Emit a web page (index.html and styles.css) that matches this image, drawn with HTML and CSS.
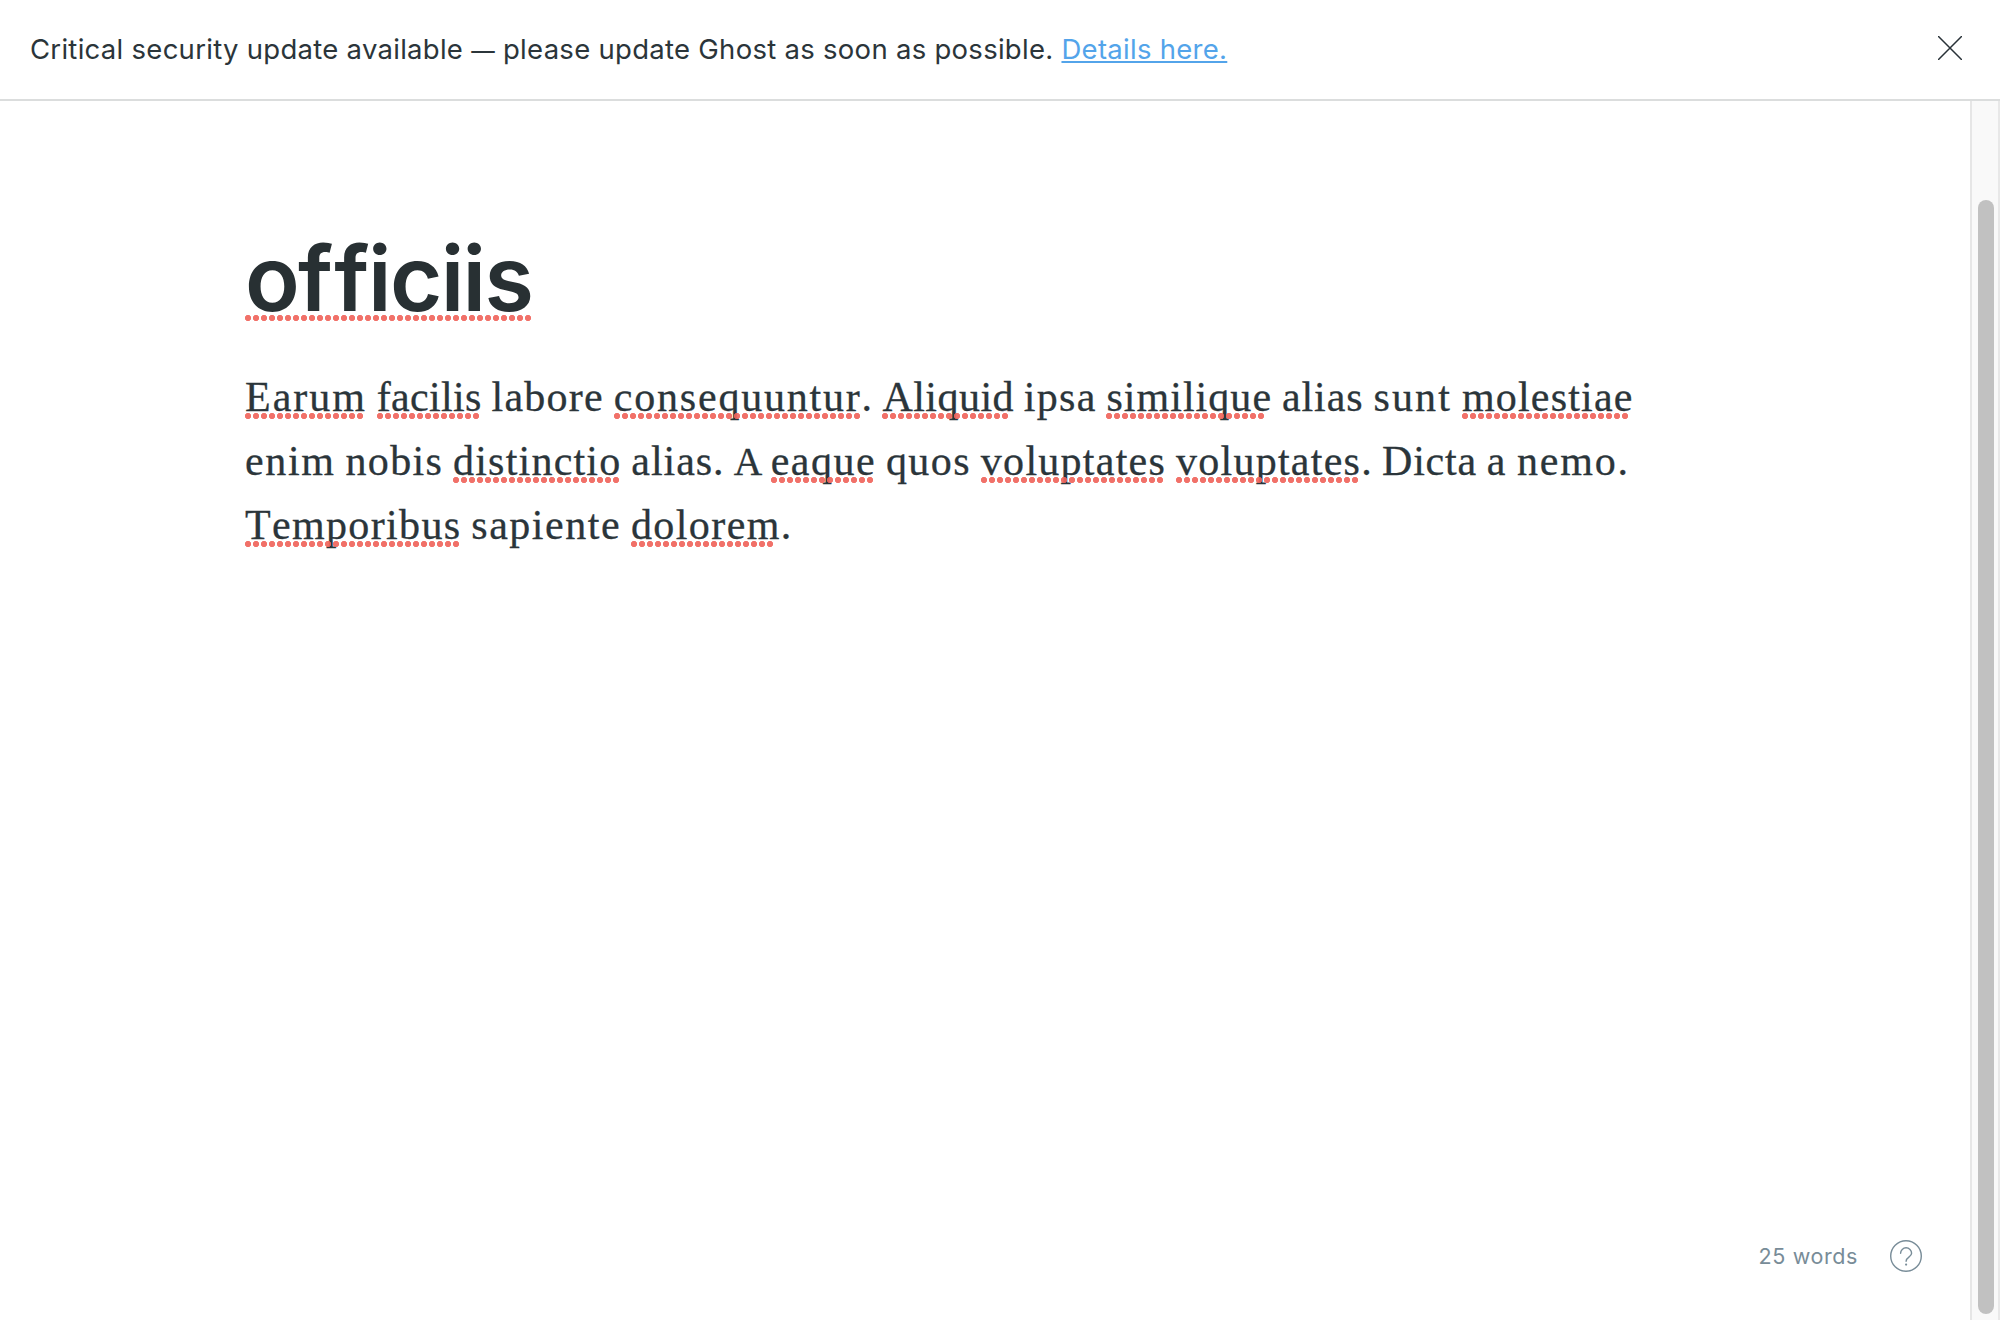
FILE: index.html
```html
<!DOCTYPE html>
<html lang="en">
<head>
<meta charset="utf-8">
<title>Editor</title>
<link rel="stylesheet" href="styles.css">
</head>
<body>
<div class="app">
  <header class="alert">
    <p class="alert-text"><span class="alert-message">Critical security update available <span class="dash">—</span> please update Ghost as soon as possible.</span> <a class="alert-link" href="#">Details here.</a></p>
    <button class="alert-close" aria-label="Close">
      <svg width="24" height="24" viewBox="0 0 24 24"><path d="M.5.5l23 23M23.5.5l-23 23" fill="none" stroke="#293238" stroke-width="1.5" stroke-linecap="round"/></svg>
    </button>
  </header>
  <div class="workspace">
    <main class="editor">
      <article class="post">
        <h1 class="title"><span class="misspelled">o<span class="title-f">f</span>ficiis</span></h1>
        <p class="body"><span class="misspelled w-earum">Earum</span> <span class="misspelled w-facilis">facilis</span> <span class="w-labore">labore</span> <span class="misspelled w-consequuntur">consequuntur</span>. <span class="misspelled w-aliquid">Aliquid</span> <span class="w-ipsa">ipsa</span> <span class="misspelled w-similique">similique</span> <span class="w-alias">alias</span> <span class="w-sunt">sunt</span> <span class="misspelled w-molestiae">molestiae</span><br>
        <span class="w-enim">enim</span> <span class="w-nobis">nobis</span> <span class="misspelled w-distinctio">distinctio</span> <span class="w-alias">alias</span>. <span class="w-a-cap">A</span> <span class="misspelled w-eaque">eaque</span> <span class="w-quos">quos</span> <span class="misspelled w-voluptates">voluptates</span> <span class="misspelled w-voluptates">voluptates</span>. <span class="w-dicta">Dicta</span> <span class="w-a">a</span> <span class="w-nemo">nemo</span>.<br>
        <span class="misspelled w-temporibus">Temporibus</span> <span class="w-sapiente">sapiente</span> <span class="misspelled w-dolorem">dolorem</span>.</p>
      </article>
      <footer class="status">
        <span class="word-count">25 words</span>
        <svg class="help" width="32" height="32" viewBox="0 0 32 32" fill="none" stroke="#788c98" stroke-width="1.4" stroke-linecap="round"><circle cx="16" cy="16" r="15.3"/><path d="M10.6 13.3a5.5 5.5 0 0 1 11 0c0 3.9-5.5 3.8-5.5 7.9"/><circle cx="16.1" cy="24.6" r="1.1" fill="#788c98" stroke="none"/></svg>
      </footer>
    </main>
    <div class="scroll-track"><div class="scroll-thumb"></div></div>
  </div>
</div>
</body>
</html>
```

FILE: styles.css
```css
* { box-sizing: border-box; }
body { margin: 0; background: #fff; color: #2b353a; font-family: Inter, "Liberation Sans", sans-serif; }
.app { display: flex; flex-direction: column; height: 1320px; overflow: hidden; }

.alert { display: flex; justify-content: space-between; align-items: center; height: 101px; padding: 0 38px 0 30px; border-bottom: 2px solid #dbdddd; }
.alert-text { margin: 0 0 2px; font-size: 27.5px; line-height: 40px; letter-spacing: 0.28px; white-space: nowrap; }
.dash { font-size: 23.5px; line-height: 1; }
.alert-link { color: #53a4ea; text-decoration: underline; text-decoration-thickness: 2px; text-underline-offset: 2px; text-decoration-skip-ink: none; }
.alert-close { display: flex; padding: 0; margin: 0 0 3px; border: 0; background: none; }

.workspace { display: flex; flex: 1; min-height: 0; }
.editor { display: flex; flex-direction: column; justify-content: space-between; flex: 1; padding: 126px 48px 48px 245px; }

.title { margin: 0; font-size: 90px; line-height: 104px; font-weight: 600; letter-spacing: -1.7px; color: #283033; font-variant-ligatures: none; }
.title-f { letter-spacing: 1.2px; }
.body { margin: 34px 0 0; font-family: "Liberation Serif", serif; font-size: 42px; line-height: 64px; letter-spacing: 0.5px; word-spacing: -1.16px; font-kerning: none; font-variant-ligatures: none; white-space: nowrap; -webkit-text-stroke: 0.3px #2b353a; }

.misspelled { position: relative; display: inline-block; }
.misspelled::after { content: ""; position: absolute; left: 0; bottom: 10px; width: 100%; width: round(down, 100% + 2px, 8px); height: 6px; background: radial-gradient(circle at 3px 3px, #f0655c 2.8px, transparent 3.4px) 0 0 / 8px 6px repeat-x; opacity: 0.92; }
.title .misspelled::after { width: 286px; }

.w-earum { letter-spacing: 1.99px; }
.w-facilis { letter-spacing: 0.32px; }
.w-labore { letter-spacing: 1.26px; }
.w-consequuntur { letter-spacing: 1.79px; }
.w-aliquid { letter-spacing: 0.46px; }
.w-ipsa { letter-spacing: 1.28px; }
.w-similique { letter-spacing: 1.03px; }
.w-alias { letter-spacing: 0.95px; }
.w-sunt { letter-spacing: 2.15px; }
.w-molestiae { letter-spacing: 1.19px; }
.w-enim { letter-spacing: 1.68px; }
.w-nobis { letter-spacing: 1.32px; }
.w-distinctio { letter-spacing: 1.21px; }
.w-a-cap { font-size: 39.5px; line-height: 1; letter-spacing: -1.5px; }
.w-eaque { letter-spacing: 1.48px; }
.w-quos { letter-spacing: 1.44px; }
.w-voluptates { letter-spacing: 1.26px; }
.w-dicta { letter-spacing: 0.78px; }
.w-a { letter-spacing: 1.7px; }
.w-nemo { letter-spacing: 1.81px; }
.w-temporibus { letter-spacing: 1.35px; }
.w-sapiente { letter-spacing: 1.52px; }
.w-dolorem { letter-spacing: 1.42px; }

.status { display: flex; justify-content: flex-end; align-items: center; gap: 32px; height: 32px; }
.word-count { font-size: 21.5px; line-height: 32px; letter-spacing: 0.6px; color: #788c98; }
.help { display: block; }

.scroll-track { width: 30px; padding: 99px 4px 6px 6px; background: #f9f9f9; border-left: 2px solid #e6e6e6; border-right: 2px solid #e8e8e8; }
.scroll-thumb { width: 16px; height: 1114px; border-radius: 8px; background: #c1c1c1; }
```
